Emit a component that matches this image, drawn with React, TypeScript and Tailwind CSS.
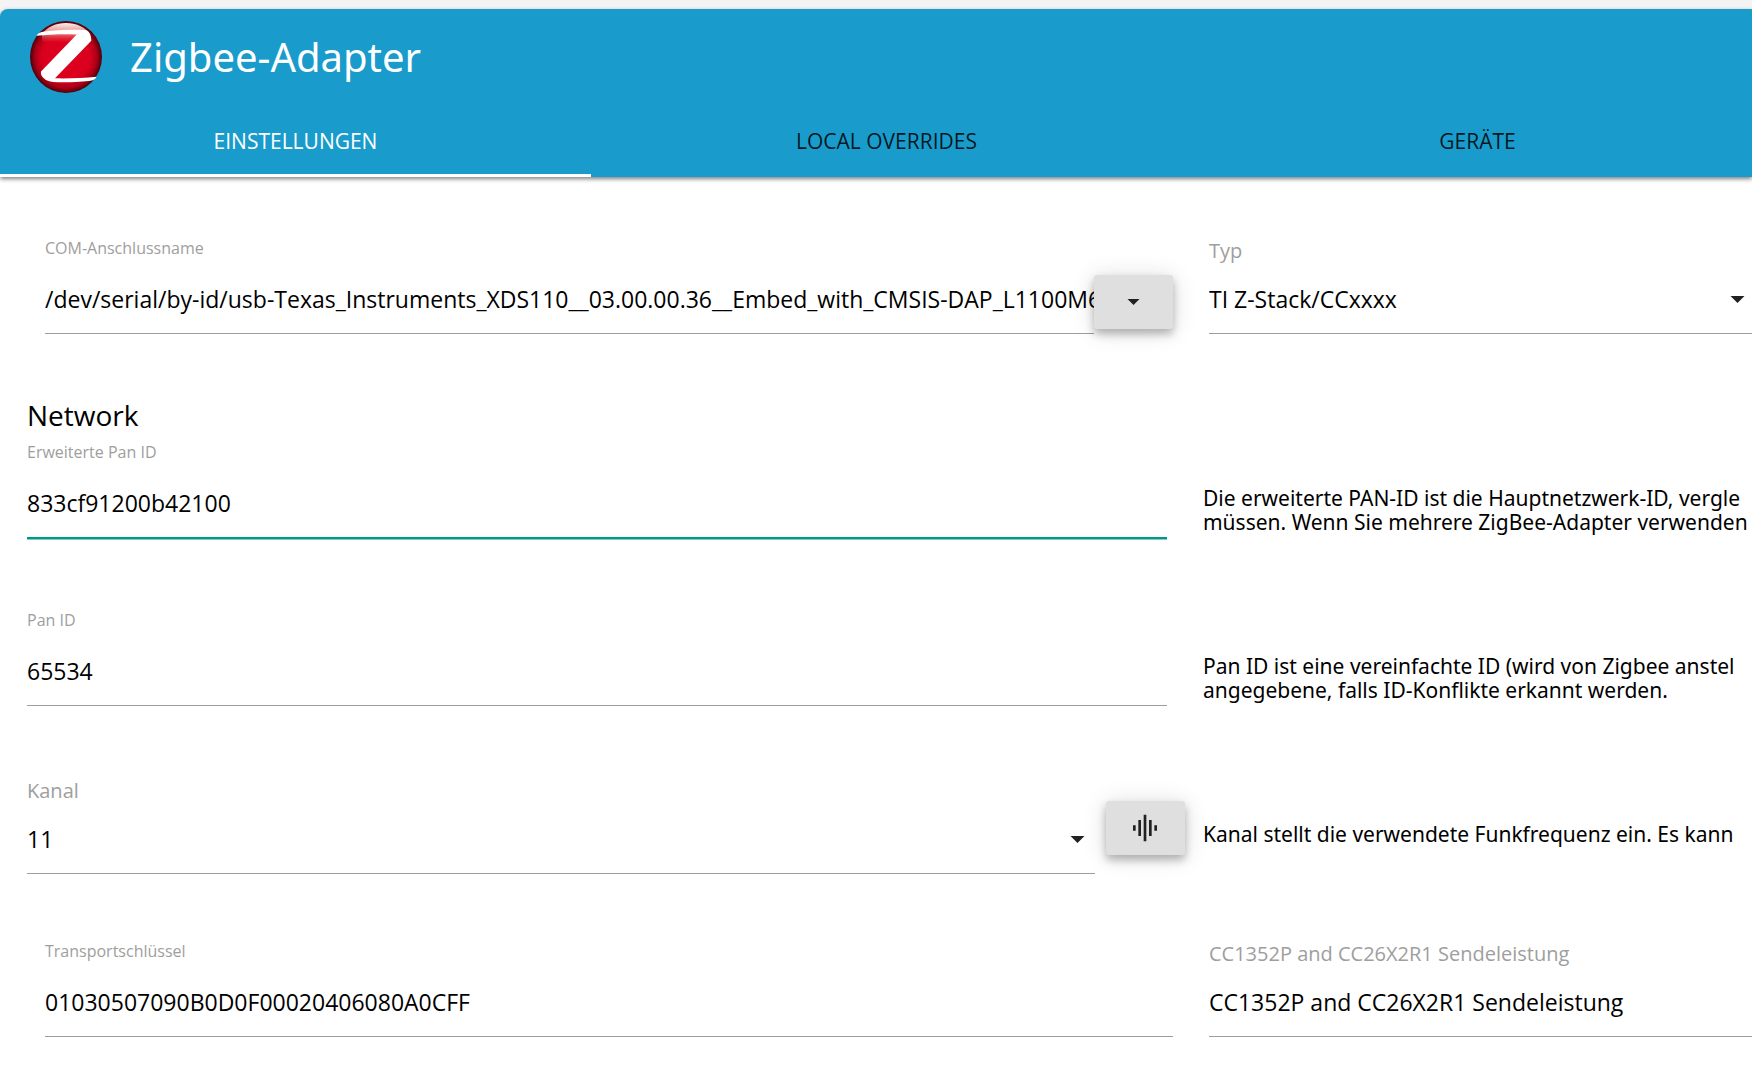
import React, { useState } from 'react';

interface FieldProps {
    id: string;
    label: string;
    value: string;
    active?: boolean;
}

interface SelectFieldProps {
    id: string;
    label: string;
    options: string[];
    arrow?: boolean;
}

const controlClass = 'block w-full h-[54px] pb-4 rounded-none border-b bg-transparent text-[23px] leading-8 text-black outline-none appearance-none';
const raisedBtn = 'flex items-center justify-center shrink-0 w-[79px] h-[54px] rounded-[3px] bg-[#dfdfdf] text-[#212121] shadow-[0_5px_9px_rgba(0,0,0,0.26),0_2px_24px_rgba(0,0,0,0.14)]';

const tabs = ['EINSTELLUNGEN', 'LOCAL OVERRIDES', 'GERÄTE'];

const Logo = () => (
    <svg viewBox="0 0 72 72" className="w-[72px] h-[72px] shrink-0" aria-hidden="true">
        <defs>
            <radialGradient id="ball" cx="50%" cy="50%" r="50%">
                <stop offset="0" stopColor="#e0001f" />
                <stop offset="0.68" stopColor="#d9001e" />
                <stop offset="0.86" stopColor="#a80016" />
                <stop offset="1" stopColor="#4d0008" />
            </radialGradient>
            <linearGradient id="gloss" x1="0" y1="0" x2="0" y2="1">
                <stop offset="0" stopColor="#fff" stopOpacity="0.95" />
                <stop offset="0.5" stopColor="#f8b5a5" stopOpacity="0.8" />
                <stop offset="1" stopColor="#e8303c" stopOpacity="0.2" />
            </linearGradient>
        </defs>
        <circle cx="36" cy="36" r="36" fill="url(#ball)" />
        <path d="M12 20.500V13C18 5.500 26 2 36 2S54 5.500 60 13L53 20.500Z" fill="url(#gloss)" />
        <path d="M6.500 14.800C8 12.200 10 11.200 13 10.800C24 9 43 8.500 55 9C59 9.300 61.300 13.500 61.300 19.700L25 57.300C39 57.600 54 57 66.500 55.800C65.500 58.500 63 59.600 59 60C46 61.300 33 61.700 23 61C15.500 60.300 10 55.500 11 50.500L46.700 13.400C33 12.800 18 13.400 6.500 14.800Z" fill="#fff" />
    </svg>
);

const Caret: React.FC<{ className: string }> = ({ className }) => (
    <svg viewBox="0 0 14 7" className={className} aria-hidden="true">
        <path d="M0 0h14L7 7z" fill="#212121" />
    </svg>
);

const Field: React.FC<FieldProps> = (props) => {
    const [value, setValue] = useState(props.value);

    return (
        <div className="flex-1 min-w-0">
            <label htmlFor={props.id} className="block h-11 text-[16px] leading-6 text-[#9e9e9e]">{props.label}</label>
            <input
                id={props.id}
                type="text"
                value={value}
                onChange={(e) => setValue(e.target.value)}
                className={`${controlClass} ${props.active ? 'border-[#009688] shadow-[0_1px_0_0_#009688,0_2px_0_0_#80cbc4]' : 'border-[#9e9e9e]'}`}
            />
        </div>
    );
};

const SelectField: React.FC<SelectFieldProps> = (props) => {
    return (
        <div className="flex-1 min-w-0">
            <label htmlFor={props.id} className="block h-11 pt-[3px] text-[20px] leading-6 text-[#9e9e9e]">{props.label}</label>
            <div className="relative">
                <select id={props.id} className={`${controlClass} border-[#9e9e9e]`}>
                    {props.options.map((item) => <option key={item}>{item}</option>)}
                </select>
                {props.arrow && <Caret className="absolute right-[10px] top-4 w-[15px] h-[7px] pointer-events-none" />}
            </div>
        </div>
    );
};

const Help: React.FC<{ text: string }> = ({ text }) => (
    <p className="w-1/3 px-[18px] pt-[46px] font-['Noto_Sans',sans-serif] text-[21px] leading-6 whitespace-pre">{text}</p>
);

const App = () => {
    const [activeTab, setActiveTab] = useState(0);

    return (
        <div className="min-h-screen overflow-hidden bg-white pb-8 font-['Open_Sans',sans-serif] text-black">
            <div className="bg-[#f4f4f4] pt-[9px]">
                <header className="relative rounded-tl-lg bg-[#199bcb] shadow-[0_2px_4px_rgba(0,0,0,0.5)]">
                    <div className="flex items-center gap-7 pl-[30px] pt-3">
                        <Logo />
                        <h1 className="font-['Noto_Sans',sans-serif] text-[40px] leading-[72px] text-white">Zigbee-Adapter</h1>
                    </div>
                    <nav className="-mr-[21px] mt-[13px] flex">
                        {tabs.map((tab, i) => (
                            <button
                                key={tab}
                                onClick={() => setActiveTab(i)}
                                className={`flex-1 h-[71px] pt-[3px] border-b-[3px] text-[21px] ${activeTab === i ? 'border-white text-white' : 'border-transparent text-black/85'}`}
                            >
                                {tab}
                            </button>
                        ))}
                    </nav>
                </header>
            </div>

            {/* the form runs a little past the right edge, as the tabs do */}
            <main className="-mr-[21px] pt-[59px]">
                <div className="flex pl-[27px]">
                    <div className="flex w-2/3 px-[18px]">
                        <Field id="port" label="COM-Anschlussname" value="/dev/serial/by-id/usb-Texas_Instruments_XDS110__03.00.00.36__Embed_with_CMSIS-DAP_L1100M66" />
                        <button aria-label="COM-Anschlussname" className={`${raisedBtn} mt-[39px]`}>
                            <Caret className="w-[13px] h-[6px]" />
                        </button>
                    </div>
                    <div className="flex w-1/3 px-[18px]">
                        <SelectField id="type" label="Typ" options={['TI Z-Stack/CCxxxx']} arrow />
                    </div>
                </div>

                <h2 className="mt-[65px] mb-[9px] pl-[27px] text-[28px] leading-8 font-medium">Network</h2>

                <div className="flex flex-col gap-[70px] pl-[9px]">
                    <div className="flex">
                        <div className="flex w-2/3 px-[18px]">
                            <Field id="extPanID" label="Erweiterte Pan ID" value="833cf91200b42100" active />
                        </div>
                        <Help text={'Die erweiterte PAN-ID ist die Hauptnetzwerk-ID, vergle\nmüssen. Wenn Sie mehrere ZigBee-Adapter verwenden'} />
                    </div>
                    <div className="flex">
                        <div className="flex w-2/3 px-[18px]">
                            <Field id="panID" label="Pan ID" value="65534" />
                        </div>
                        <Help text={'Pan ID ist eine vereinfachte ID (wird von Zigbee anstel\nangegebene, falls ID-Konflikte erkannt werden.'} />
                    </div>
                    <div className="flex">
                        <div className="flex w-2/3 gap-[11px] pl-[18px]">
                            <SelectField id="channel" label="Kanal" options={['11']} arrow />
                            <button aria-label="Kanal" className={`${raisedBtn} mt-[25px]`}>
                                <svg viewBox="0 0 24 24" className="w-8 h-8" fill="currentColor" aria-hidden="true">
                                    <path d="M7 18h2V6H7v12zm4 4h2V2h-2v20zm-8-8h2v-4H3v4zm12 4h2V6h-2v12zm4-8v4h2v-4h-2z" />
                                </svg>
                            </button>
                        </div>
                        <Help text="Kanal stellt die verwendete Funkfrequenz ein. Es kann" />
                    </div>
                </div>

                <div className="mt-[65px] flex pl-[27px]">
                    <div className="flex w-2/3 px-[18px]">
                        <Field id="netKey" label="Transportschlüssel" value="01030507090B0D0F00020406080A0CFF" />
                    </div>
                    <div className="flex w-1/3 pl-[18px]">
                        <SelectField id="power" label="CC1352P and CC26X2R1 Sendeleistung" options={['CC1352P and CC26X2R1 Sendeleistung']} />
                    </div>
                </div>
            </main>
        </div>
    );
};

export default App;
